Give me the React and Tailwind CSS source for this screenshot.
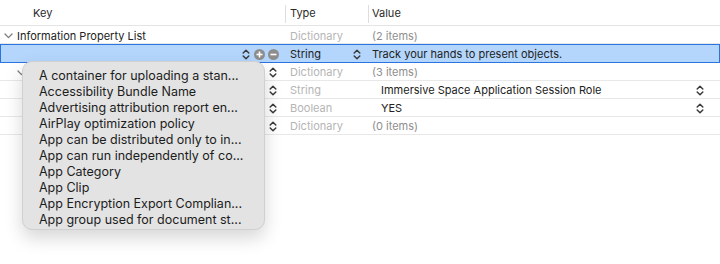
import React from 'react';

const Stepper = ({ className = '' }) => (
  <svg width="8" height="11" viewBox="0 0 8 11" className={className} fill="none">
    <path d="M1.2 4 L4 1.3 L6.8 4" stroke="currentColor" strokeWidth="1.5" strokeLinecap="round" strokeLinejoin="round" />
    <path d="M1.2 7 L4 9.7 L6.8 7" stroke="currentColor" strokeWidth="1.5" strokeLinecap="round" strokeLinejoin="round" />
  </svg>
);

const Disclosure = ({ className = '' }) => (
  <svg width="9" height="6" viewBox="0 0 9 6" className={className} fill="none">
    <path d="M1 1 L4.5 4.6 L8 1" stroke="currentColor" strokeWidth="1.3" strokeLinecap="round" strokeLinejoin="round" />
  </svg>
);

const RoundButton = ({ plus }) => (
  <svg width="11" height="11" viewBox="0 0 11 11">
    <circle cx="5.5" cy="5.5" r="5.5" fill="#8d8d8d" />
    <rect x="2.5" y="4.7" width="6" height="1.6" fill="#fff" />
    {plus && <rect x="4.7" y="2.5" width="1.6" height="6" fill="#fff" />}
  </svg>
);

const suggestions = [
  'A container for uploading a stan...',
  'Accessibility Bundle Name',
  'Advertising attribution report en...',
  'AirPlay optimization policy',
  'App can be distributed only to in...',
  'App can run independently of co...',
  'App Category',
  'App Clip',
  'App Encryption Export Complian...',
  'App group used for document st...',
  'Application is available to instal...',
];

const rows = [
  { type: 'Dictionary', value: '(3 items)', popup: false },
  { type: 'String', value: 'Immersive Space Application Session Role', popup: true },
  { type: 'Boolean', value: 'YES', popup: true },
  { type: 'Dictionary', value: '(0 items)', popup: false },
];

export default function App() {
  return (
    <div
      className="relative w-[720px] h-[264px] overflow-hidden bg-white text-[11px] text-[#222]"
      style={{ fontFamily: 'Inter, "Liberation Sans", sans-serif' }}
    >
      {/* header */}
      <div className="flex h-[26px] items-center border-b border-[#e4e4e4] pt-[2px]">
        <div className="w-[285px] pl-[33px] text-[#2a2a2a]">Key</div>
        <div className="flex w-[83px] items-center">
          <div className="h-[18px] w-px bg-[#dedede]" />
          <span className="pl-[4px] text-[#2a2a2a]">Type</span>
        </div>
        <div className="flex flex-1 items-center">
          <div className="h-[18px] w-px bg-[#dedede]" />
          <span className="pl-[3px] text-[#2a2a2a]">Value</span>
        </div>
      </div>

      {/* root row */}
      <div className="flex h-[18px] items-center border-b border-[#e8e8e8] pt-[3px]">
        <div className="flex w-[285px] items-center">
          <Disclosure className="ml-[4px] mr-[4px] text-[#7c7c7c]" />
          <span>Information Property List</span>
        </div>
        <div className="w-[83px] pl-[5px] text-[#b5b5b5]">Dictionary</div>
        <div className="flex-1 pl-[4px] text-[#8e8e8e]">(2 items)</div>
      </div>

      {/* selected row */}
      <div className="flex h-[19px] items-center border border-[#2a74e0] bg-[#b4d6fd] pt-[1px]">
        <div className="flex w-[284px] items-center justify-end gap-[3px] pr-[6px]">
          <Stepper className="mr-[1px] text-[#3a3a3a]" />
          <RoundButton plus />
          <RoundButton />
        </div>
        <div className="flex w-[83px] items-center justify-between pl-[5px] pr-[7px]">
          <span>String</span>
          <Stepper className="text-[#3a3a3a]" />
        </div>
        <div className="flex-1 pl-[4px]">Track your hands to present objects.</div>
      </div>

      {rows.map((r, i) => (
        <div key={i} className="flex h-[18px] items-center border-b border-[#e8e8e8] pt-[2px]">
          <div className="flex w-[285px] items-center justify-between pr-[8px]">
            {i === 0 ? <Disclosure className="ml-[17px] text-[#7c7c7c]" /> : <span />}
            <Stepper className="text-[#3a3a3a]" />
          </div>
          <div className="w-[83px] pl-[5px] text-[#b5b5b5]">{r.type}</div>
          {r.popup ? (
            <div className="flex flex-1 items-center justify-between pl-[13px] pr-[16px]">
              <span>{r.value}</span>
              <Stepper className="text-[#3a3a3a]" />
            </div>
          ) : (
            <div className="flex-1 pl-[4px] text-[#8e8e8e]">{r.value}</div>
          )}
        </div>
      ))}

      {/* completion popup */}
      <div className="absolute left-[22px] top-[61px] h-[169px] w-[243px] overflow-hidden rounded-[10px] border border-[#d0d0d0] bg-[#e3e3e3] pt-[6px] text-[12.5px] shadow-[0_8px_18px_rgba(0,0,0,0.16)]">
        {suggestions.map((s) => (
          <div key={s} className="h-[16px] whitespace-nowrap pl-[16px] leading-[16px] text-[#1c1c1c]">
            {s}
          </div>
        ))}
      </div>
    </div>
  );
}
